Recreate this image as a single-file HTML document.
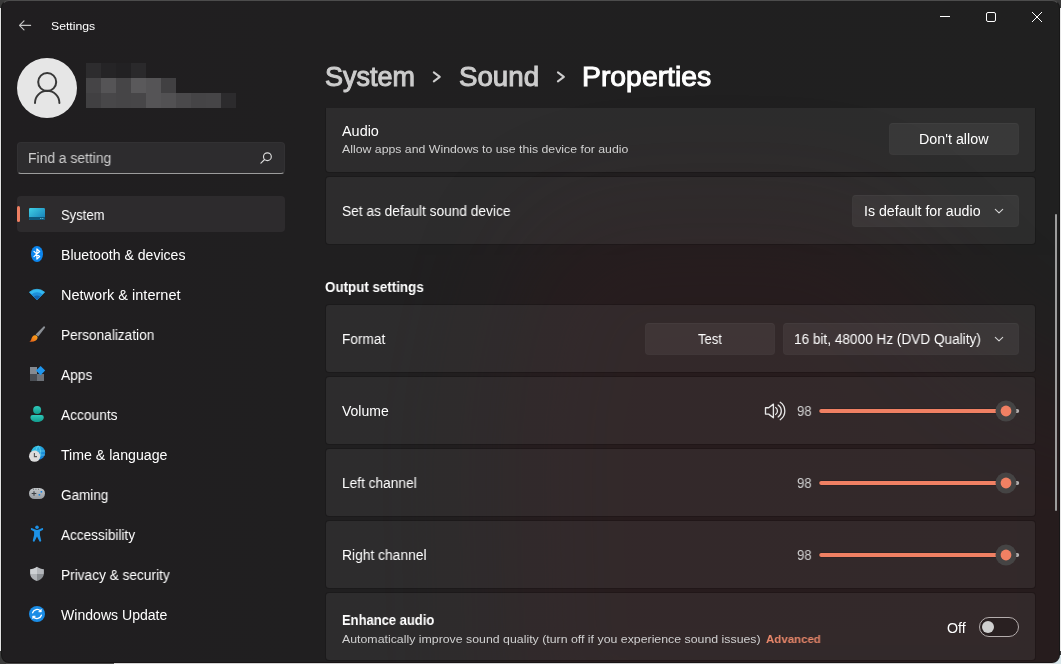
<!DOCTYPE html>
<html lang="en"><head><meta charset="utf-8"><title>Settings</title>
<style>
html,body{margin:0;padding:0;width:1061px;height:664px;overflow:hidden;background:#3b3b3b;}
*{box-sizing:border-box;}
#edgeL{position:absolute;left:0;top:8px;width:1px;height:643px;background:#e2e2e2;}
#edgeR{position:absolute;left:1060px;top:8px;width:1px;height:643px;background:#e8e8e8;}
#edgeB{position:absolute;left:114px;top:663px;width:940px;height:1px;background:#d4d4d4;}
#edgeB2{position:absolute;left:6px;top:663px;width:108px;height:1px;background:#4b4b4b;}
#win{position:absolute;left:1px;top:0;width:1059px;height:663px;border-radius:8px;overflow:hidden;
 background:linear-gradient(90deg,#201e20 0px,#201f20 300px,#202020 1059px);
 border-top:1px solid #4c4c4c;border-bottom:1px solid #181415;border-left:1px solid #171717;border-right:1px solid #171717;}
#page{position:absolute;left:0;top:0;width:1061px;height:664px;}
.t{position:absolute;white-space:pre;will-change:transform;line-height:40px;font-family:'Liberation Sans',sans-serif;transform-origin:0 50%;}
.abs{position:absolute;}
.card{position:absolute;left:325px;width:711px;height:69px;border-radius:4px;background:rgba(255,255,255,0.058);background-clip:padding-box;border:1px solid rgba(0,0,0,0.15);}
.btn{position:absolute;height:32px;border-radius:4px;background:rgba(255,255,255,0.058);border:1px solid rgba(255,255,255,0.012);border-top-color:rgba(255,255,255,0.03);}
svg{position:absolute;overflow:visible;}
</style></head>
<body>
<div class="abs" style="left:1052px;top:655px;width:9px;height:9px;background:#d9e6ea"></div><div id="edgeL"></div><div id="edgeR"></div><div id="edgeB"></div><div id="edgeB2"></div>
<div id="win"><svg style="left:-2px;top:-1px" width="1061" height="664" viewBox="0 0 1061 664">
 <defs><filter id="mica" color-interpolation-filters="sRGB" x="-30%" y="-30%" width="160%" height="160%"><feGaussianBlur stdDeviation="55" color-interpolation-filters="sRGB"/></filter></defs>
 <path d="M500 760 L490 420 L530 240 L600 205 L850 205 L930 280 L1020 370 L1250 430 L1250 760 Z" fill="rgb(55,21,25)" opacity="0.3" filter="url(#mica)"/>
</svg></div>
<div id="page">

<!-- title bar -->
<svg style="left:0;top:0" width="1061" height="48" viewBox="0 0 1061 48">
 <path d="M24 20.9 L19.5 25.4 L24 29.9 M19.7 25.4 H30.6" stroke="#c4c4c4" stroke-width="1.15" fill="none" stroke-linecap="round" stroke-linejoin="round"/>
 <rect x="940" y="16" width="10" height="1" fill="#fff"/>
 <rect x="986.5" y="12.5" width="9" height="9" rx="1.5" fill="none" stroke="#fff" stroke-width="1"/>
 <path d="M1032 12 L1042 22 M1042 12 L1032 22" stroke="#fff" stroke-width="1" fill="none"/>
</svg>

<!-- avatar -->
<div class="abs" style="left:17px;top:58px;width:60px;height:60px;border-radius:30px;background:#e6e6e6"></div>
<svg style="left:17px;top:58px" width="60" height="60" viewBox="17 58 60 60">
 <circle cx="47.2" cy="82" r="9" fill="none" stroke="#383838" stroke-width="2"/>
 <path d="M35 103 A12.2 12.2 0 0 1 59.4 103" fill="none" stroke="#383838" stroke-width="2" stroke-linecap="round"/>
</svg>
<!-- pixelated name -->
<svg style="left:86px;top:63px" width="150" height="45" viewBox="0 0 150 45" shape-rendering="crispEdges">
 <rect x="0" y="0" width="15" height="15" fill="#2d2c2e"/><rect x="15" y="0" width="15" height="15" fill="#252426"/><rect x="30" y="0" width="15" height="15" fill="#222123"/><rect x="45" y="0" width="15" height="15" fill="#2a292b"/>
 <rect x="0" y="15" width="15" height="15" fill="#454446"/><rect x="15" y="15" width="15" height="15" fill="#555456"/><rect x="30" y="15" width="15" height="15" fill="#464547"/><rect x="45" y="15" width="15" height="15" fill="#5a595b"/><rect x="60" y="15" width="15" height="15" fill="#555456"/><rect x="75" y="15" width="15" height="15" fill="#414042"/>
 <rect x="0" y="30" width="15" height="15" fill="#414042"/><rect x="15" y="30" width="15" height="15" fill="#484749"/><rect x="30" y="30" width="15" height="15" fill="#464547"/><rect x="45" y="30" width="15" height="15" fill="#474648"/><rect x="60" y="30" width="15" height="15" fill="#555456"/><rect x="75" y="30" width="15" height="15" fill="#525153"/><rect x="90" y="30" width="15" height="15" fill="#4a494b"/><rect x="105" y="30" width="15" height="15" fill="#454446"/><rect x="120" y="30" width="15" height="15" fill="#464547"/><rect x="135" y="30" width="15" height="15" fill="#2c2b2d"/>
</svg>

<!-- search -->
<div class="abs" style="left:17px;top:142px;width:268px;height:32px;border-radius:4px;background:#2d2c2e;border:1px solid #323133;border-bottom:1px solid #9c9c9c;"></div>
<svg style="left:255px;top:148px" width="24" height="20" viewBox="255 148 24 20">
 <circle cx="267.4" cy="156.7" r="3.9" fill="none" stroke="#dcdcdc" stroke-width="1.15"/>
 <path d="M264.6 159.5 L260.9 163.2" stroke="#dcdcdc" stroke-width="1.15" stroke-linecap="round"/>
</svg>

<!-- nav selected -->
<div class="abs" style="left:17px;top:196px;width:268px;height:36px;border-radius:4px;background:#2d2b2d"></div>
<div class="abs" style="left:17px;top:206px;width:3px;height:16px;border-radius:1.5px;background:#ee7f62"></div>

<!-- nav icons -->
<svg style="left:0;top:190px" width="60" height="440" viewBox="0 190 60 440">
 <defs>
  <linearGradient id="gSys" x1="0" y1="0" x2="1" y2="1"><stop offset="0" stop-color="#3fd0e6"/><stop offset="1" stop-color="#1479b4"/></linearGradient>
  <linearGradient id="gAcc" x1="0" y1="0" x2="0" y2="1"><stop offset="0" stop-color="#2fcabb"/><stop offset="1" stop-color="#129a8c"/></linearGradient>
  <linearGradient id="gShield" x1="0" y1="0" x2="1" y2="0"><stop offset="0" stop-color="#c9ccd0"/><stop offset="0.5" stop-color="#b0b4b8"/><stop offset="0.5" stop-color="#8d9196"/><stop offset="1" stop-color="#7c8085"/></linearGradient>
  <linearGradient id="gGlobe" x1="0" y1="0" x2="1" y2="1"><stop offset="0" stop-color="#35d0e8"/><stop offset="1" stop-color="#0f6fd0"/></linearGradient>
  <linearGradient id="gPad" x1="0" y1="0" x2="0" y2="1"><stop offset="0" stop-color="#c4c8cb"/><stop offset="1" stop-color="#979ba0"/></linearGradient>
 </defs>
 <!-- System -->
 <rect x="29" y="208" width="16" height="12" rx="1.2" fill="url(#gSys)"/>
 <path d="M29 217 H45 V218.8 A1.2 1.2 0 0 1 43.8 220 H30.2 A1.2 1.2 0 0 1 29 218.8 Z" fill="#0e587c"/>
 <rect x="40.3" y="218" width="1" height="1" fill="#6fd3ee"/><rect x="42.3" y="218" width="1" height="1" fill="#6fd3ee"/>
 <!-- Bluetooth -->
 <ellipse cx="37" cy="254" rx="6" ry="8" fill="#0c86ee"/>
 <path d="M34 251.4 L39.6 256.5 L36.9 259.1 V248.9 L39.6 251.5 L34 256.6" fill="none" stroke="#fff" stroke-width="1.2" stroke-linejoin="round" stroke-linecap="round"/>
 <!-- Network -->
 <path d="M37 299.6 L29.4 292.2 A11.4 11.4 0 0 1 44.6 292.2 Z" fill="#33b9f2" stroke="#33b9f2" stroke-width="0.8" stroke-linejoin="round"/>
 <path d="M37 300 L31.5 294.6 A7.7 7.7 0 0 1 42.5 294.6 Z" fill="#1d8fdb"/>
 <path d="M37 300 L33.8 296.8 A4.5 4.5 0 0 1 40.2 296.8 Z" fill="#1368b6"/>
 <!-- Personalization -->
 <defs><linearGradient id="gHandle" x1="0" y1="0" x2="1" y2="1"><stop offset="0" stop-color="#a7acb2"/><stop offset="1" stop-color="#6f747a"/></linearGradient>
 <linearGradient id="gTip" x1="1" y1="0" x2="0" y2="1"><stop offset="0" stop-color="#fba81c"/><stop offset="0.55" stop-color="#f2821a"/><stop offset="1" stop-color="#dd541a"/></linearGradient></defs>
 <path d="M43.6 326.4 C44.4 325.9 45.5 326.9 45 327.8 L38.3 336.6 L35.6 334.4 Z" fill="url(#gHandle)"/>
 <path d="M34.8 335.2 C36.6 334.9 38.1 336.5 37.5 338.3 C36.7 340.8 33.4 342.5 29.3 341.6 C30.9 340.8 31.2 339.6 31.6 338.2 C32.1 336.6 33.2 335.4 34.8 335.2 Z" fill="url(#gTip)"/>
 <!-- Apps -->
 <rect x="30" y="367" width="7" height="7" fill="#858a91"/>
 <rect x="30" y="374" width="7" height="7" fill="#4a4e54"/>
 <rect x="37" y="374" width="7" height="7" fill="#6d7279"/>
 <path d="M40.6 366 L45.2 370.6 L40.6 375.2 L36 370.6 Z" fill="#1e96ee"/>
 <!-- Accounts -->
 <circle cx="37.1" cy="410" r="4" fill="url(#gAcc)"/>
 <path d="M32.8 414.9 H41.4 A2.4 2.4 0 0 1 43.8 417.3 C43.8 420.4 40.8 422 37.1 422 C33.4 422 30.4 420.4 30.4 417.3 A2.4 2.4 0 0 1 32.8 414.9 Z" fill="url(#gAcc)"/>
 <!-- Time & language -->
 <circle cx="38.2" cy="452.8" r="7" fill="url(#gGlobe)"/>
 <path d="M38.2 445.8 C35 449 35 456.6 38.2 459.8 M38.2 445.8 C41.4 449 41.4 456.6 38.2 459.8 M31.4 451 H45 M31.4 455 H45" stroke="#7fe0f2" stroke-width="0.7" fill="none" opacity="0.8"/>
 <circle cx="34.6" cy="456.2" r="5.6" fill="#dcdcdc"/>
 <path d="M34.4 453 V456.6 H37" stroke="#555" stroke-width="1.1" fill="none"/>
 <!-- Gaming -->
 <rect x="29" y="488" width="16" height="11" rx="5.5" fill="url(#gPad)"/>
 <path d="M31.7 493.5 H36.3 M34 491.2 V495.8" stroke="#3d4045" stroke-width="1.1"/>
 <rect x="40.6" y="491" width="1.6" height="1.6" fill="#1a84e0"/><rect x="38.6" y="494" width="1.6" height="1.6" fill="#1a84e0"/>
 <rect x="33" y="488.8" width="0.9" height="0.9" fill="#5a5e63"/><rect x="35.5" y="488.8" width="0.9" height="0.9" fill="#5a5e63"/><rect x="38" y="488.8" width="0.9" height="0.9" fill="#5a5e63"/>
 <!-- Accessibility -->
 <circle cx="37" cy="527.3" r="1.75" fill="#1d92e6"/>
 <path d="M30.9 529.4 C30.6 528.6 31.4 527.8 32.2 528.2 L35.2 529.5 C36.4 530 37.6 530 38.8 529.5 L41.8 528.2 C42.6 527.8 43.4 528.6 43.1 529.4 C42.9 529.8 42.6 530.1 42.2 530.3 L39.9 531.5 L39.9 535 L41.2 540.6 C41.4 541.7 39.9 542.2 39.4 541.2 L37 536.4 L34.6 541.2 C34.1 542.2 32.6 541.7 32.8 540.6 L34.1 535 L34.1 531.5 L31.8 530.3 C31.4 530.1 31.1 529.8 30.9 529.4 Z" fill="#1d92e6"/>
 <!-- Privacy -->
 <clipPath id="cShield"><path d="M37 566.8 C39.2 568.3 41.4 569 43.9 569.2 V573 C43.9 577 41.2 579.6 37 581 C32.8 579.6 30.1 577 30.1 573 V569.2 C32.6 569 34.8 568.3 37 566.8 Z"/></clipPath>
 <g clip-path="url(#cShield)"><rect x="29" y="566" width="8" height="8" fill="#cdd0d3"/><rect x="37" y="566" width="8" height="8" fill="#b4b7bb"/><rect x="29" y="574" width="8" height="8" fill="#b0b3b7"/><rect x="37" y="574" width="8" height="8" fill="#8b8f93"/></g>
 <!-- Windows Update -->
 <circle cx="37" cy="614" r="8" fill="#1b8de6"/>
 <path d="M32.6 612.8 A4.6 4.6 0 0 1 40.6 611.2 M41.4 615.2 A4.6 4.6 0 0 1 33.4 616.8" stroke="#fff" stroke-width="1.3" fill="none" stroke-linecap="round"/>
 <path d="M41.3 609.2 V611.9 H38.6 Z M32.7 618.8 V616.1 H35.4 Z" fill="#fff" stroke="#fff" stroke-width="0.6" stroke-linejoin="round"/>
</svg>

<!-- heading chevrons -->
<svg style="left:425px;top:66px" width="150" height="22" viewBox="425 66 150 22">
 <path d="M433.8 72.4 L439.8 76.9 L433.8 81.4" stroke="#cdcdcd" stroke-width="2" fill="none" stroke-linecap="round" stroke-linejoin="round"/>
 <path d="M557.9 72.4 L563.9 76.9 L557.9 81.4" stroke="#cdcdcd" stroke-width="2" fill="none" stroke-linecap="round" stroke-linejoin="round"/>
</svg>

<!-- cards -->
<div class="card" style="top:104px;height:69px;border-top-left-radius:0;border-top-right-radius:0;clip-path:inset(4px 0 0 0)"></div>
<div class="card" style="top:176px"></div>
<div class="card" style="top:304px"></div>
<div class="card" style="top:376px"></div>
<div class="card" style="top:448px"></div>
<div class="card" style="top:520px"></div>
<div class="card" style="top:592px"></div>

<!-- buttons -->
<div class="btn" style="left:889px;top:123px;width:130px"></div>
<div class="btn" style="left:852px;top:195px;width:167px"></div>
<div class="btn" style="left:645px;top:323px;width:130px"></div>
<div class="btn" style="left:783px;top:323px;width:236px"></div>
<svg style="left:990px;top:200px" width="20" height="160" viewBox="990 200 20 160">
 <path d="M995.3 209.3 L999 212.9 L1002.7 209.3" stroke="#d4d4d4" stroke-width="1.1" fill="none" stroke-linecap="round" stroke-linejoin="round"/>
 <path d="M995.3 337.3 L999 340.9 L1002.7 337.3" stroke="#d4d4d4" stroke-width="1.1" fill="none" stroke-linecap="round" stroke-linejoin="round"/>
</svg>

<!-- speaker -->
<svg style="left:760px;top:398px" width="30" height="26" viewBox="760 398 30 26">
 <path d="M765.5 407.7 H768.7 L773.4 404.1 V417.7 L768.7 414.1 H765.5 Z" fill="none" stroke="#e6e6e6" stroke-width="1.35" stroke-linejoin="round"/>
 <path d="M775.6 407.5 A4.2 4.2 0 0 1 775.6 414.5" fill="none" stroke="#e6e6e6" stroke-width="1.3" stroke-linecap="round"/>
 <path d="M778.1 405 A7.2 7.2 0 0 1 778.1 417" fill="none" stroke="#e6e6e6" stroke-width="1.3" stroke-linecap="round"/>
 <path d="M780.2 402.3 A10.5 10.5 0 0 1 780.2 419.7" fill="none" stroke="#e6e6e6" stroke-width="1.3" stroke-linecap="round"/>
</svg>

<!-- sliders -->
<svg style="left:810px;top:397px" width="220" height="28" viewBox="810 397 220 28">
 <rect x="1000" y="409" width="19.2" height="4" rx="2" fill="#b2aeae"/>
 <rect x="818.6" y="408.4" width="190" height="5.2" rx="2.6" fill="rgba(0,0,0,0.22)"/>
 <rect x="819.2" y="409" width="188" height="4" rx="2" fill="#f08063"/>
 <circle cx="1006" cy="411" r="10.5" fill="#454444"/>
 <circle cx="1006" cy="411" r="5.4" fill="#f08063"/>
</svg>
<svg style="left:810px;top:469px" width="220" height="28" viewBox="810 469 220 28">
 <rect x="1000" y="481" width="19.2" height="4" rx="2" fill="#b2aeae"/>
 <rect x="818.6" y="480.4" width="190" height="5.2" rx="2.6" fill="rgba(0,0,0,0.22)"/>
 <rect x="819.2" y="481" width="188" height="4" rx="2" fill="#f08063"/>
 <circle cx="1006" cy="483" r="10.5" fill="#454444"/>
 <circle cx="1006" cy="483" r="5.4" fill="#f08063"/>
</svg>
<svg style="left:810px;top:541px" width="220" height="28" viewBox="810 541 220 28">
 <rect x="1000" y="553" width="19.2" height="4" rx="2" fill="#b2aeae"/>
 <rect x="818.6" y="552.4" width="190" height="5.2" rx="2.6" fill="rgba(0,0,0,0.22)"/>
 <rect x="819.2" y="553" width="188" height="4" rx="2" fill="#f08063"/>
 <circle cx="1006" cy="555" r="10.5" fill="#454444"/>
 <circle cx="1006" cy="555" r="5.4" fill="#f08063"/>
</svg>

<!-- toggle -->
<div class="abs" style="left:979px;top:617px;width:40px;height:20px;border-radius:10px;border:1px solid #b4adad;background:#292021"></div>
<div class="abs" style="left:982px;top:621px;width:12px;height:12px;border-radius:6px;background:#cfcfcf"></div>

<!-- scrollbar -->
<div class="abs" style="left:1055px;top:214px;width:2px;height:297px;border-radius:1px;background:#9d9d9d"></div>

<div class="t" style="left:51px;top:6px;font-size:11.5px;color:#fff;transform:scaleX(1.0623);">Settings</div>
<div class="t" style="left:28px;top:138px;font-size:14px;color:#cfcfcf;transform:scaleX(0.9912);">Find a setting</div>
<div class="t" style="left:61px;top:195px;font-size:14px;color:#fff;transform:scaleX(0.9325);">System</div>
<div class="t" style="left:61px;top:235px;font-size:14px;color:#fff;transform:scaleX(1.0058);">Bluetooth &amp; devices</div>
<div class="t" style="left:61px;top:275px;font-size:14px;color:#fff;transform:scaleX(1.0380);">Network &amp; internet</div>
<div class="t" style="left:61px;top:315px;font-size:14px;color:#fff;transform:scaleX(0.9742);">Personalization</div>
<div class="t" style="left:61px;top:355px;font-size:14px;color:#fff;transform:scaleX(0.9818);">Apps</div>
<div class="t" style="left:61px;top:395px;font-size:14px;color:#fff;transform:scaleX(0.9820);">Accounts</div>
<div class="t" style="left:61px;top:435px;font-size:14px;color:#fff;transform:scaleX(1.0109);">Time &amp; language</div>
<div class="t" style="left:61px;top:475px;font-size:14px;color:#fff;transform:scaleX(0.9648);">Gaming</div>
<div class="t" style="left:61px;top:515px;font-size:14px;color:#fff;transform:scaleX(0.9718);">Accessibility</div>
<div class="t" style="left:61px;top:555px;font-size:14px;color:#fff;transform:scaleX(0.9772);">Privacy &amp; security</div>
<div class="t" style="left:61px;top:595px;font-size:14px;color:#fff;transform:scaleX(1.0050);">Windows Update</div>
<div class="t" style="left:325px;top:57px;font-size:27px;color:#cdcdcd;transform:scaleX(0.9991);-webkit-text-stroke:1.0px #cdcdcd;">System</div>
<div class="t" style="left:459px;top:57px;font-size:27px;color:#cdcdcd;transform:scaleX(1.0250);-webkit-text-stroke:1.0px #cdcdcd;">Sound</div>
<div class="t" style="left:582px;top:57px;font-size:27px;color:#fff;transform:scaleX(1.0501);-webkit-text-stroke:1.0px #fff;">Properties</div>
<div class="t" style="left:342px;top:111px;font-size:14px;color:#fff;transform:scaleX(1.0301);">Audio</div>
<div class="t" style="left:342px;top:129px;font-size:11.6px;color:#cfcfcf;transform:scaleX(1.0604);">Allow apps and Windows to use this device for audio</div>
<div class="t" style="left:919px;top:119px;font-size:14px;color:#fff;transform:scaleX(1.0208);">Don't allow</div>
<div class="t" style="left:342px;top:191px;font-size:14px;color:#fff;transform:scaleX(0.9795);">Set as default sound device</div>
<div class="t" style="left:864px;top:191px;font-size:14px;color:#fff;transform:scaleX(1.0116);">Is default for audio</div>
<div class="t" style="left:325px;top:267px;font-size:14px;color:#fff;transform:scaleX(0.9540);font-weight:700;">Output settings</div>
<div class="t" style="left:342px;top:319px;font-size:14px;color:#fff;transform:scaleX(0.9744);">Format</div>
<div class="t" style="left:698px;top:319px;font-size:14px;color:#fff;transform:scaleX(0.9329);">Test</div>
<div class="t" style="left:794px;top:319px;font-size:14px;color:#fff;transform:scaleX(0.9720);">16 bit, 48000 Hz (DVD Quality)</div>
<div class="t" style="left:342px;top:391px;font-size:14px;color:#fff;transform:scaleX(0.9994);">Volume</div>
<div class="t" style="left:797px;top:391px;font-size:14px;color:#cfcfcf;transform:scaleX(0.9401);">98</div>
<div class="t" style="left:342px;top:463px;font-size:14px;color:#fff;transform:scaleX(0.9784);">Left channel</div>
<div class="t" style="left:797px;top:463px;font-size:14px;color:#cfcfcf;transform:scaleX(0.9401);">98</div>
<div class="t" style="left:342px;top:535px;font-size:14px;color:#fff;transform:scaleX(0.9876);">Right channel</div>
<div class="t" style="left:797px;top:535px;font-size:14px;color:#cfcfcf;transform:scaleX(0.9401);">98</div>
<div class="t" style="left:342px;top:600px;font-size:14px;color:#fff;transform:scaleX(0.9266);font-weight:700;">Enhance audio</div>
<div class="t" style="left:342px;top:619px;font-size:11.6px;color:#cfcfcf;transform:scaleX(1.0638);">Automatically improve sound quality (turn off if you experience sound issues)</div>
<div class="t" style="left:766px;top:619px;font-size:11.6px;color:#e8876a;transform:scaleX(0.9884);font-weight:700;">Advanced</div>
<div class="t" style="left:947px;top:608px;font-size:14px;color:#fff;transform:scaleX(1.0179);">Off</div>
</div>
</body></html>
